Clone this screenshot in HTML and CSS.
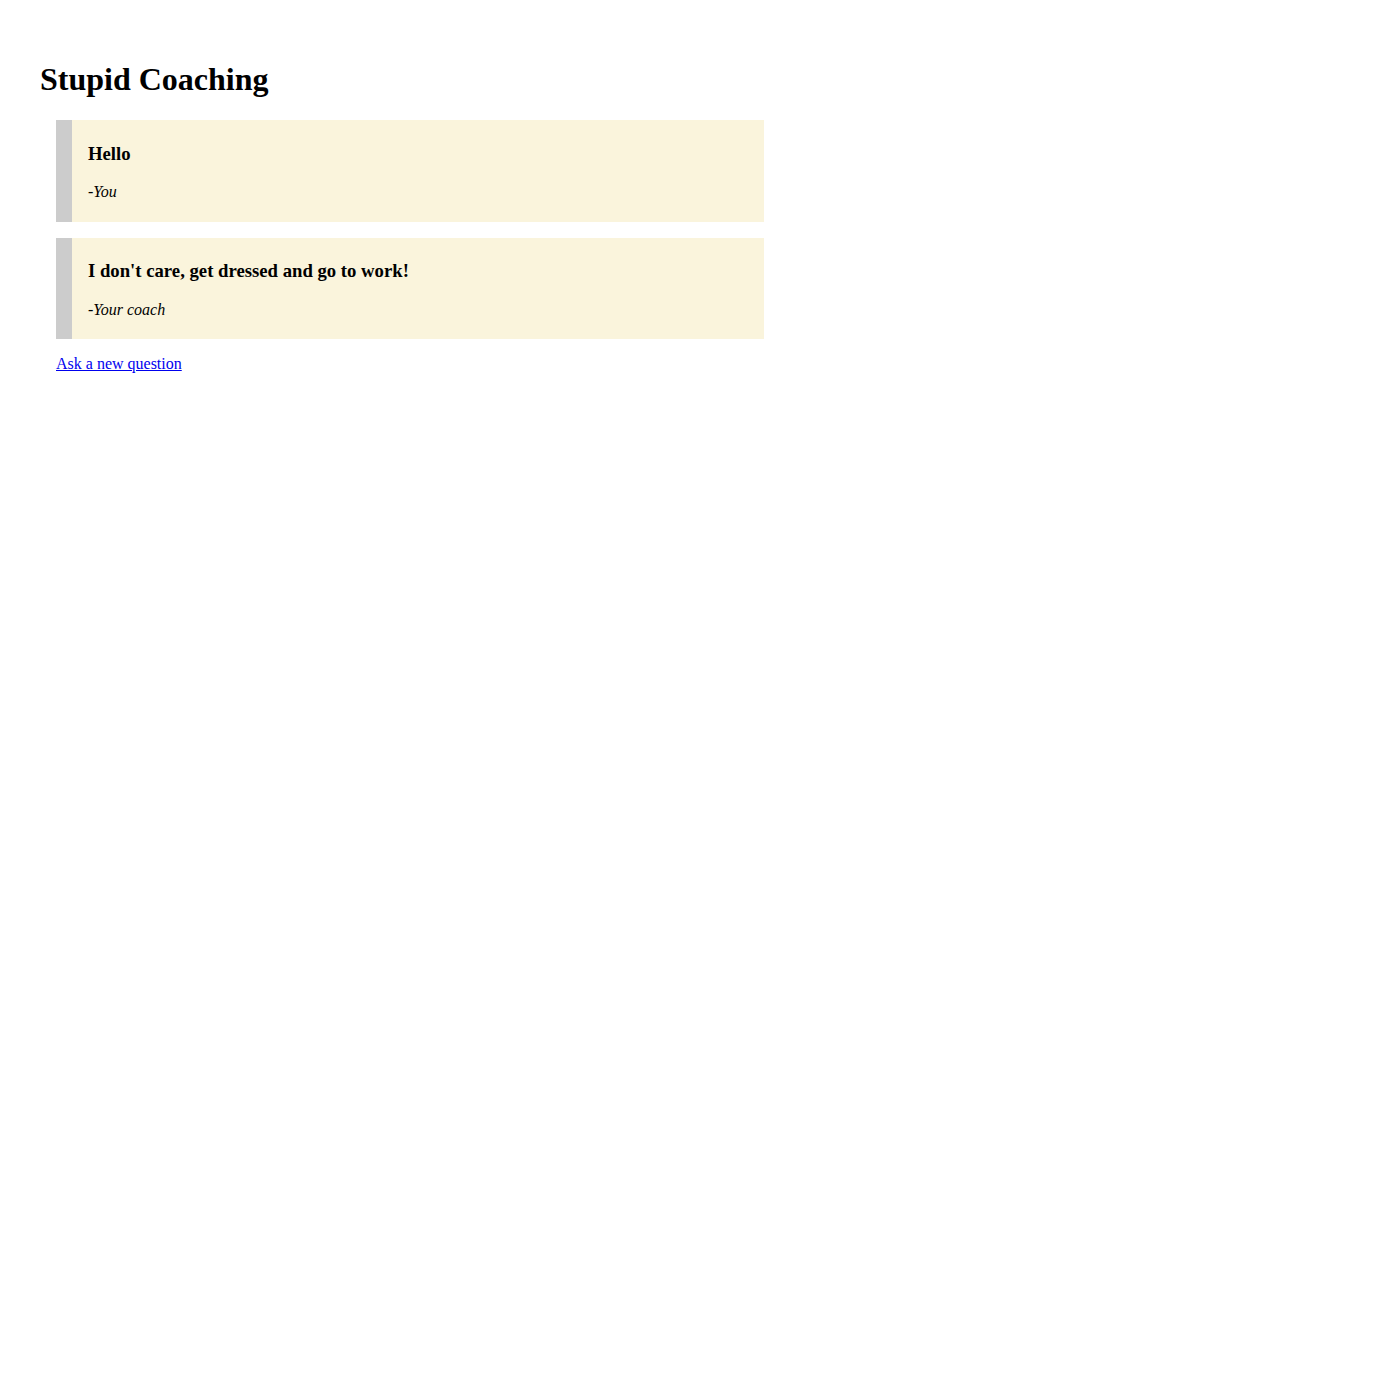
FILE: index.html
```html
<!DOCTYPE html>
<html>
<head>
<meta charset="utf-8">
<title>Stupid Coaching</title>
<link rel="stylesheet" href="styles.css">
</head>
<body>
<div class="page">
  <h1 class="title">Stupid Coaching</h1>
  <div class="thread">
    <blockquote class="quote">
      <h3 class="quote-text">Hello</h3>
      <p class="quote-author">-You</p>
    </blockquote>
    <blockquote class="quote">
      <h3 class="quote-text">I don't care, get dressed and go to work!</h3>
      <p class="quote-author">-Your coach</p>
    </blockquote>
    <a class="ask-link" href="#">Ask a new question</a>
  </div>
</div>
</body>
</html>
```
FILE: styles.css
```css
html, body {
  margin: 0;
  padding: 0;
  background: #ffffff;
}
body {
  font-family: "Liberation Serif", "Times New Roman", serif;
  color: #000;
}
.page {
  padding: 40px 40px;
}
.title {
  font-size: 32px;
  font-weight: bold;
  margin: 21.44px 0 21.44px 0;
}
.thread {
  padding-left: 16px;
  display: flex;
  flex-direction: column;
  align-items: flex-start;
}
.quote {
  box-sizing: border-box;
  width: 708px;
  margin: 0 0 16px 0;
  background: #faf4dc;
  border-left: 16px solid #cccccc;
  padding: 4px 16px 4.5px 16px;
}
.quote-text {
  font-size: 18.72px;
  font-weight: bold;
  margin: 18.72px 0 18.5px 0;
}
.quote-author {
  font-size: 16px;
  font-style: italic;
  margin: 0 0 16px 0;
}
.ask-link {
  font-size: 16px;
  color: #0000ee;
  text-decoration: underline;
}
```
